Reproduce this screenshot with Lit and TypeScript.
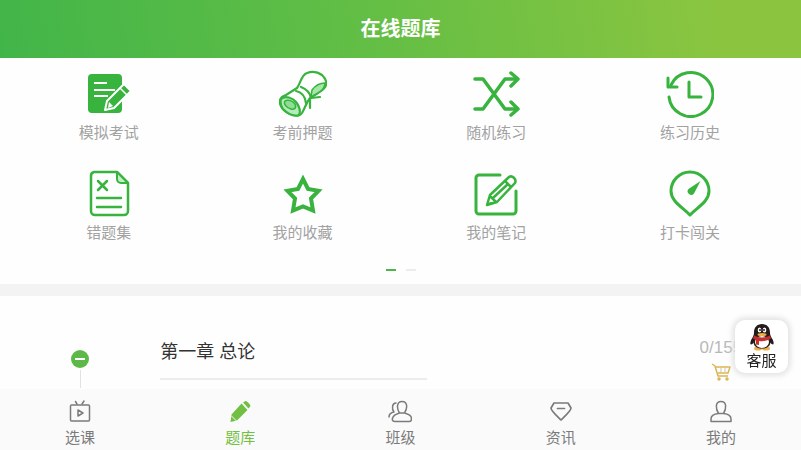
import { LitElement, html, svg, css } from "lit";
import { customElement, state } from "lit/decorators.js";
import { classMap } from "lit/directives/class-map.js";

const features = [
  {
    label: "模拟考试",
    icon: svg`<path fill="currentColor" d="M7 4h26a4 4 0 0 1 4 4v31a4 4 0 0 1-4 4H7a4 4 0 0 1-4-4V8a4 4 0 0 1 4-4z"/>
      <path stroke="#fff" stroke-width="2" d="M9 13h13M9 20h21M9 26h14"/>
      <path fill="currentColor" stroke="#fff" stroke-width="2" stroke-linejoin="round" d="M39 14l7 7L29 38l-9 2 2-9z"/>
      <path stroke="#fff" stroke-width="1.500" d="M35 18l7 7"/><path fill="#fff" d="M24 32l4 4-5 2z"/>`,
  },
  {
    label: "考前押题",
    icon: svg`<g stroke="currentColor" stroke-width="2.200" stroke-linejoin="round" stroke-linecap="round">
      <path fill="#fff" d="M28 3C33 1 39 2 43 5c3 3 5 6 4 10-1 4-5 6-8 8l-8 5c-4 5-5 10-8 15-2 3-5 3-8 2-5-1-9-3-12-7-2-3-3-7-1-10 1-2 3-2 5-3l11-7c4-5 4-13 10-15z"/>
      <path fill="#b5ebba" d="M2 29c4-4 12-1 15 3 3 4 5 9 3 13-6 2-12-2-16-6-2-3-3-7-2-10z"/>
      <path fill="#8edf95" stroke-width="1.500" d="M6 31c3-2 8 0 10 3 2 4-1 6-4 5-4-1-8-5-6-8z"/>
      <path fill="#a5e6ab" stroke-width="1.500" d="M46 13c-5 0-10 3-13 7l-1 7 7-4c3-2 7-4 7-10z"/>
      <path d="M22 17c5 2 9 5 10 11M17 21c5 1 9 5 10 12"/>
      <path d="M32 28l9-1M31 29v9"/></g>`,
  },
  {
    label: "随机练习",
    icon: svg`<g stroke="currentColor" stroke-width="3.500" stroke-linecap="round" stroke-linejoin="round">
      <path d="M3 9h8l22 30h12M3 39h8L33 9h12"/><path d="M39 3l7 6-7 7M39 32l7 7-7 6"/></g>`,
  },
  {
    label: "练习历史",
    icon: svg`<g stroke="currentColor" stroke-width="3" stroke-linecap="round" stroke-linejoin="round">
      <path d="M5 15A22 22 0 1 1 3 27"/><path d="M2 8v9h9M23 12v15h12"/></g>`,
  },
  {
    label: "错题集",
    icon: svg`<g stroke="currentColor" stroke-width="2.500" stroke-linecap="round" stroke-linejoin="round">
      <path d="M9 2h23l11 11v28a4 4 0 0 1-4 4H10a4 4 0 0 1-4-4V6a4 4 0 0 1 3-4z"/>
      <path fill="#c4efc7" stroke-width="2" d="M32 2v7a4 4 0 0 0 4 4h7z"/>
      <path d="M13 11l9 9M22 11l-9 9M12 28h24M12 37h24"/></g>`,
  },
  {
    label: "我的收藏",
    icon: svg`<path stroke="currentColor" stroke-width="4" d="M24 9l5 10 10.500 1.800-7.500 7.700L34 40.500 24 36.500 14 40.500l2-12-7.500-7.700L19 19z"/>`,
  },
  {
    label: "我的笔记",
    icon: svg`<g stroke="currentColor" stroke-width="3" stroke-linecap="round" stroke-linejoin="round">
      <path d="M28 5H7a3 3 0 0 0-3 3v33a3 3 0 0 0 3 3h34a3 3 0 0 0 3-3V21"/>
      <path stroke-width="2.500" d="M15 35l3-10L37 7c3-2 8 2 6 6L25 32zM33 11l6 6M18 26l6 6M22 27L36 14M15 35l4-2"/></g>`,
  },
  {
    label: "打卡闯关",
    icon: svg`<path stroke="currentColor" stroke-width="3" stroke-linejoin="round" d="M24 45C18 38 5 32 5 21a19 19 0 0 1 38 0c0 11-13 17-19 24z"/>
      <path fill="currentColor" d="M34.500 11L28 23.500a3.500 3.500 0 1 1-5.500-4.500z"/>`,
  },
];

const tabs = [
  {
    label: "选课",
    icon: svg`<g stroke="currentColor" stroke-width="1.500" stroke-linejoin="round" stroke-linecap="round">
      <rect x="2.500" y="6" width="19" height="16" rx="1"/><path d="M9 5L7.500 2.500M14 5l2-3M10 11v6l5-3z"/></g>`,
  },
  {
    label: "题库",
    icon: svg`<path fill="currentColor" d="M13.500 4.500l6 6.500L9 21.500 2.500 23l1-7.500zM15 3.500L17.500 2c1-.5 5 3.500 5 5L20.500 9.500z"/>
      <path stroke="#fafafa" stroke-width="1" d="M3 16.500l5.500 5.500"/>`,
  },
  {
    label: "班级",
    icon: svg`<g stroke="currentColor" stroke-width="1.500" stroke-linejoin="round" stroke-linecap="round">
      <path d="M14 2.500c6 0 5.500 7 2.500 11.500 4 1 7 2 7 5.500 0 2-.5 3-2 3H7c-2 0-3-1-2.500-3C5 16 8 15 11.500 14 8.500 9.500 8.500 2.500 14 2.500zM11.500 14h5"/>
      <path d="M8 4c-4 0-4.500 6-2 9-3 .5-5 2-5 5"/></g>`,
  },
  {
    label: "资讯",
    icon: svg`<g stroke="currentColor" stroke-width="1.700" stroke-linejoin="round" stroke-linecap="round">
      <path d="M5 4h14l3 5c0 3-7 9-10 12C9 18 2 12 2 9z"/><path d="M8.500 9.500h7"/></g>`,
  },
  {
    label: "我的",
    icon: svg`<g stroke="currentColor" stroke-width="1.500" stroke-linejoin="round">
      <path d="M12 2.500c6 0 5.500 7 2.500 12 5 .5 7.500 2 7.500 5.500v2.500H2V20c0-3.500 2.500-5 7.500-5.500C6.500 9.500 6 2.500 12 2.500zM9.500 14.500h5"/></g>`,
  },
];

@customElement("app-root")
export class AppRoot extends LitElement {
  @state() private active = 1;

  static styles = css`
    :host {
      display: flex;
      flex-direction: column;
      min-height: 100vh;
      background: #fefefe;
      color: #333;
      font-family: "Liberation Sans", "Noto Sans CJK SC", sans-serif;
    }
    * { box-sizing: border-box; }
    svg { display: block; fill: none; }
    button {
      border: 0;
      padding: 0;
      background: none;
      font: inherit;
      cursor: pointer;
    }
    a { color: inherit; text-decoration: none; }
    .header {
      background: linear-gradient(80deg, #42b549 0%, #62be45 45%, #8bc540 90%);
      color: #fff;
      text-align: center;
    }
    .title {
      margin: 0;
      font-size: 20px;
      line-height: 58px;
      font-weight: 700;
    }
    .features {
      display: grid;
      grid-template-columns: repeat(4, 1fr);
      row-gap: 20px;
      padding: 12px 14px 0 12px;
    }
    .feature {
      display: flex;
      flex-direction: column;
      align-items: center;
      gap: 3px;
      height: 80px;
      color: #37b33e;
    }
    .feature svg { width: 48px; height: 48px; }
    .feature-label { color: #a2a2a2; font-size: 15px; line-height: 24px; }
    .dots {
      display: flex;
      justify-content: center;
      gap: 10px;
      padding: 19px 0 13px;
    }
    .dot { width: 10px; height: 2px; background: #ececec; }
    .dot.on { background: #4cb748; }
    .chapters {
      flex: 1;
      border-top: 12px solid #f3f3f4;
      padding-top: 36px;
    }
    .chapter { display: grid; grid-template-columns: 1fr 3fr 1fr; }
    .marker {
      display: flex;
      flex-direction: column;
      align-items: center;
      gap: 2px;
      padding-top: 18px;
    }
    .toggle {
      display: grid;
      place-items: center;
      width: 18px;
      height: 18px;
      border-radius: 50%;
      background: #5cb947;
    }
    .minus { width: 10px; height: 2px; background: #fff; }
    .stem { flex: 1; width: 1px; background: #e2e2e2; }
    .name {
      margin: 0;
      padding-top: 4px;
      font-size: 18px;
      line-height: 32px;
      font-weight: 400;
    }
    .rule { width: 55.5%; height: 2px; margin-top: 10px; background: #ececec; }
    .name-cell { padding-bottom: 8px; }
    .progress {
      display: flex;
      flex-direction: column;
      align-items: center;
      gap: 2px;
      padding-top: 4px;
      color: #b8b8b8;
      font-size: 17px;
      line-height: 24px;
    }
    .cart svg { width: 20px; height: 20px; }
    .tabs {
      display: grid;
      grid-template-columns: repeat(5, 1fr);
      background: #fafafa;
      height: 61px;
      padding-top: 10px;
    }
    .tab {
      display: flex;
      flex-direction: column;
      align-items: center;
      gap: 3px;
      color: #7b7b7b;
      font-size: 15px;
      line-height: 24px;
    }
    .tab svg { width: 24px; height: 24px; }
    .tab.active { color: #72c043; }
    .service {
      position: fixed;
      right: 13px;
      bottom: 77px;
      display: flex;
      flex-direction: column;
      align-items: center;
      width: 53px;
      height: 53px;
      padding-top: 3px;
      border-radius: 10px;
      background: #fff;
      box-shadow: 0 0 6px 2px #dedede;
      color: #222;
      font-size: 15px;
      line-height: 20px;
    }
    .service svg { width: 28px; height: 28px; }
  `;

  render() {
    return html`
      <header class="header"><h1 class="title">在线题库</h1></header>
      <nav class="features">
        ${features.map(
          (f) => html`<a class="feature" href="#">
            <svg viewBox="0 0 48 48" aria-hidden="true">${f.icon}</svg>
            <span class="feature-label">${f.label}</span>
          </a>`
        )}
      </nav>
      <div class="dots"><span class="dot on"></span><span class="dot"></span></div>
      <main class="chapters">
        <section class="chapter">
          <div class="marker">
            <button class="toggle" aria-label="收起"><span class="minus"></span></button>
            <span class="stem"></span>
          </div>
          <div class="name-cell">
            <h2 class="name">第一章 总论</h2>
            <div class="rule"></div>
          </div>
          <div class="progress">
            <span>0/155</span>
            <button class="cart" aria-label="购买">
              <svg viewBox="0 0 20 20" stroke="#dcb452" stroke-width="1.500" stroke-linejoin="round">
                <path d="M1 2l3 2 3 10h10M5 5h14l-2 6H7" />
                <path stroke="#c9c2ac" stroke-width="1" d="M10 6v4M14 6v4" />
                <circle cx="8" cy="17" r="1" /><circle cx="16" cy="17" r="1" />
              </svg>
            </button>
          </div>
        </section>
      </main>
      <nav class="tabs">
        ${tabs.map(
          (t, i) => html`<button
            class=${classMap({ tab: true, active: i === this.active })}
            @click=${() => (this.active = i)}
          >
            <svg viewBox="0 0 24 24" aria-hidden="true">${t.icon}</svg>
            <span>${t.label}</span>
          </button>`
        )}
      </nav>
      <button class="service">
        <svg viewBox="0 0 28 28" aria-hidden="true">
          <ellipse cx="10" cy="25.500" rx="4" ry="2" fill="#eeb04a" />
          <ellipse cx="18" cy="25.500" rx="4" ry="2" fill="#eeb04a" />
          <path fill="#241c1c" d="M14 1c5 0 8 3.500 8 8.500 0 2 .5 3.500 2 6 2 3 2 6 1 6s-2-1-2.500-2c-.5 4-4 6-8.500 6s-8-2-8.500-6C5 20.500 4 21.500 3 21.500s-1-3 1-6c1.500-2.500 2-4 2-6C6 4.500 9 1 14 1z" />
          <ellipse cx="14" cy="19" rx="7" ry="6" fill="#fff" />
          <path fill="#c5302d" d="M6 12.500c5 2.500 11 2.500 16 0l1 3c-4 2.500-8 3-12 2.500v4l-3-.5V17l-3-1.500z" />
          <ellipse cx="11.500" cy="7" rx="1.800" ry="2.500" fill="#fff" />
          <ellipse cx="16.500" cy="7" rx="1.800" ry="2.500" fill="#fff" />
          <circle cx="12" cy="7" r="1" fill="#222" /><circle cx="16" cy="7" r="1" fill="#222" />
          <ellipse cx="14" cy="11.500" rx="4.500" ry="1.500" fill="#efb145" />
        </svg>
        <span>客服</span>
      </button>
    `;
  }
}
